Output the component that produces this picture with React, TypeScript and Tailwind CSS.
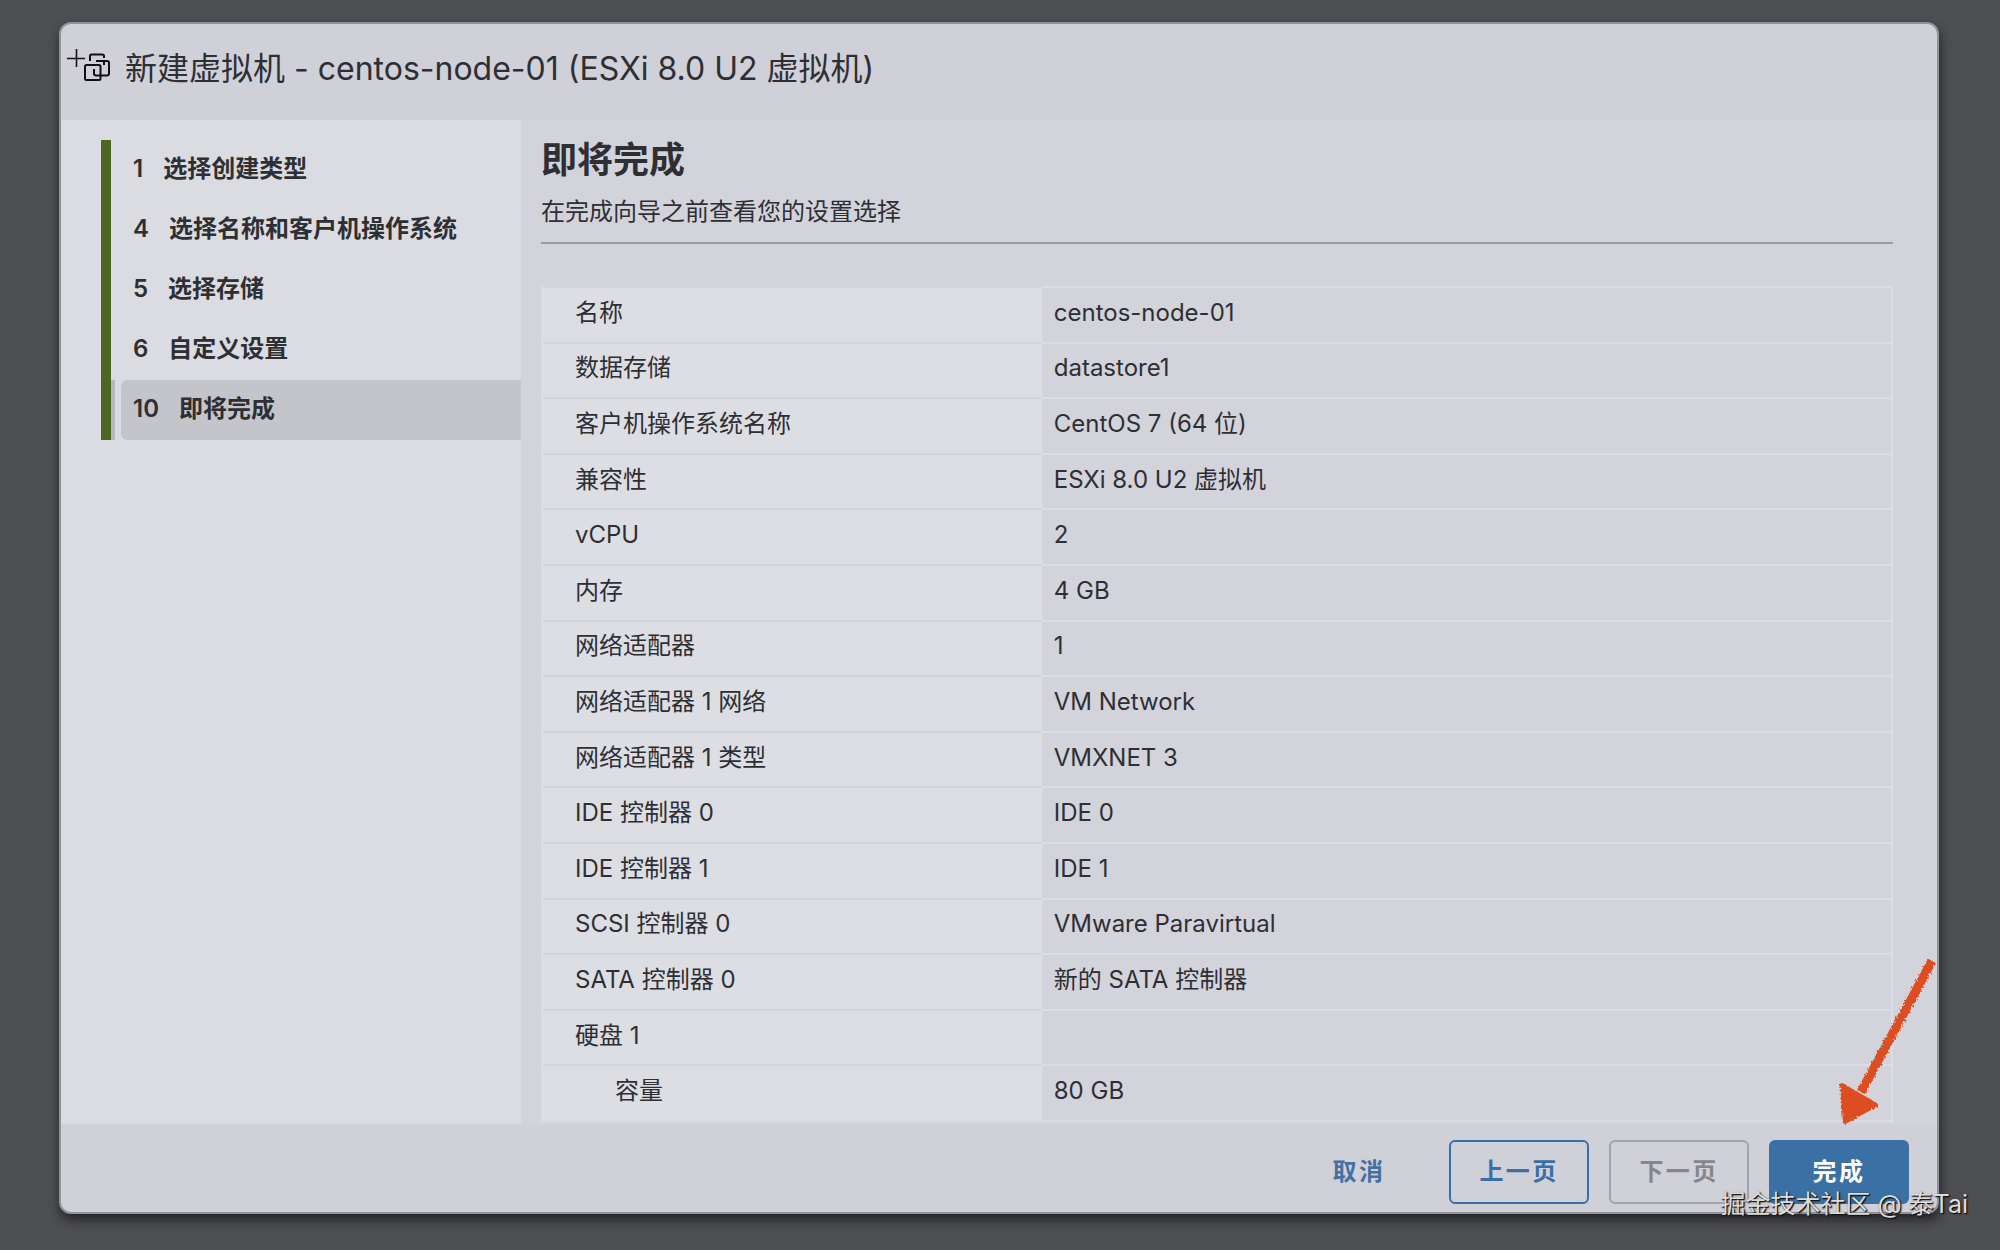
import clsx from 'clsx';

const steps = [
  { no: '1', label: '选择创建类型' },
  { no: '4', label: '选择名称和客户机操作系统' },
  { no: '5', label: '选择存储' },
  { no: '6', label: '自定义设置' },
  { no: '10', label: '即将完成' },
];

const settings = [
  { name: '名称', value: 'centos-node-01' },
  { name: '数据存储', value: 'datastore1' },
  { name: '客户机操作系统名称', value: 'CentOS 7 (64 位)' },
  { name: '兼容性', value: 'ESXi 8.0 U2 虚拟机' },
  { name: 'vCPU', value: '2' },
  { name: '内存', value: '4 GB' },
  { name: '网络适配器', value: '1' },
  { name: '网络适配器 1 网络', value: 'VM Network' },
  { name: '网络适配器 1 类型', value: 'VMXNET 3' },
  { name: 'IDE 控制器 0', value: 'IDE 0' },
  { name: 'IDE 控制器 1', value: 'IDE 1' },
  { name: 'SCSI 控制器 0', value: 'VMware Paravirtual' },
  { name: 'SATA 控制器 0', value: '新的 SATA 控制器' },
  { name: '硬盘 1', value: '' },
  { name: '容量', value: '80 GB', child: true },
];

function NewVmIcon() {
  return (
    <svg className="mb-2" width="44" height="34" viewBox="0 0 44 34" fill="none" stroke="#111" strokeWidth="2" aria-hidden="true">
      <path d="M0 10.5H18M9.5 1V19" strokeWidth="1.6" />
      <path d="M23 13V8Q23 6.5 24.5 6.5H35.5Q37 6.5 37 8V10" />
      <path d="M29 13H40Q42 13 42 15V25.5Q42 27.5 40 27.5H29Q27 27.5 27 25.5V21" />
      <path d="M37 13V17" />
      <rect x="18" y="17" width="15.5" height="15" rx="1.5" />
    </svg>
  );
}

function Arrow() {
  return (
    <svg
      className="pointer-events-none absolute bottom-full left-full -ml-[76px] mb-3"
      width="110"
      height="176"
      viewBox="0 0 110 176"
      aria-hidden="true"
    >
      <filter id="crayon">
        <feTurbulence type="fractalNoise" baseFrequency="0.5" numOctaves="2" result="noise" />
        <feDisplacementMap in="SourceGraphic" in2="noise" scale="4" />
      </filter>
      <g filter="url(#crayon)" fill="#dd4e22" stroke="#dd4e22">
        <path d="M99 9L28 140" strokeWidth="9" />
        <path d="M9 133L43 153L12 170Z" strokeWidth="4" strokeLinejoin="round" />
      </g>
    </svg>
  );
}

export default function App() {
  return (
    <div className="relative flex min-h-screen flex-col bg-[#4e4f53] pt-[22px] pr-[61px] pb-9 pl-[59px] font-['Inter','Noto_Sans_CJK_SC',sans-serif] text-2xl text-[#2e2f33]">
      <div
        role="dialog"
        aria-labelledby="wizard-title"
        className="flex flex-1 flex-col rounded-xl border-2 border-[#929398] bg-[#d0d0d9] shadow-[1px_6px_12px_rgba(0,0,0,0.55)]"
      >
        <header className="flex h-24 shrink-0 items-center gap-3.5 pb-1.5 pl-1.5">
          <NewVmIcon />
          <h1 id="wizard-title" className="text-[32px] leading-10">新建虚拟机 - centos-node-01 (ESXi 8.0 U2 虚拟机)</h1>
        </header>

        <div className="flex flex-1">
          <nav className="w-[460px] shrink-0 bg-[#dbdce1] pt-5 pl-10">
            <ol className="border-l-10 border-[#4b6720]">
              {steps.map((step, i) => {
                const active = i === steps.length - 1;
                return (
                  <li key={step.no} className={clsx('border-l-4', active ? 'border-[#b6b8bf]' : 'border-transparent')}>
                    <button
                      type="button"
                      aria-current={active ? 'step' : undefined}
                      className={clsx(
                        'ml-1.5 flex h-15 w-[400px] items-center gap-5 rounded-l-md pb-0.5 pl-3 font-semibold',
                        active && 'bg-[#c4c5ca]'
                      )}
                    >
                      <span>{step.no}</span>
                      <span>{step.label}</span>
                    </button>
                  </li>
                );
              })}
            </ol>
          </nav>

          <main className="flex flex-1 flex-col bg-[#d3d3dc] pt-4 pr-11 pl-5">
            <h2 className="text-4xl leading-[48px] font-bold">即将完成</h2>
            <p className="mt-1 border-b-2 border-[#9a9aa5] pt-2 pb-3.5 leading-8">在完成向导之前查看您的设置选择</p>
            <div className="mt-[42px] flex-1 border-r-2 border-l-2 border-[#dcdce5] pb-0.5">
              <table className="h-full w-full border-separate border-spacing-0 border-b-2 border-[#dcdce5] text-left">
                <tbody>
                  {settings.map((row) => (
                    <tr key={row.name}>
                      <th
                        scope="row"
                        className={clsx(
                          'w-[37%] border-t-2 border-[#d4d5da] bg-[#dddee3] pb-1 font-normal',
                          row.child ? 'pl-18' : 'pl-8'
                        )}
                      >
                        {row.name}
                      </th>
                      <td className="border-t-2 border-[#dcdce5] pb-1 pl-3">{row.value}</td>
                    </tr>
                  ))}
                </tbody>
              </table>
            </div>
          </main>
        </div>

        <footer className="flex h-22 shrink-0 items-center justify-end gap-5 pt-2 pr-7 font-semibold tracking-widest">
          <button type="button" className="h-16 w-[140px] text-[#45709f]">取消</button>
          <button type="button" className="h-16 w-[140px] rounded-md border-2 border-[#3a6ea5] text-[#3a6ea5]">上一页</button>
          <button type="button" disabled className="h-16 w-[140px] rounded-md border-2 border-[#a3a4aa] text-[#85868c]">下一页</button>
          <div className="relative">
            <button type="button" className="h-16 w-[140px] rounded-md bg-[#3a70a3] font-bold text-white">完成</button>
            <Arrow />
          </div>
        </footer>
      </div>

      <p className="absolute right-8 bottom-7 text-[25px] leading-9 text-[#dcdcdc] [text-shadow:1px_1px_1px_#111,1px_1px_2px_#222]">
        掘金技术社区 @ 泰Tai
      </p>
    </div>
  );
}
